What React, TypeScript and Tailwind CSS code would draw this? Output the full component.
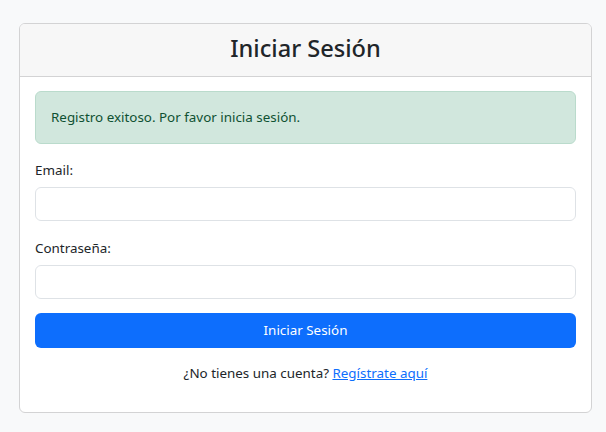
import React from 'react';

const font = { fontFamily: '"Segoe UI", "Noto Sans", "Liberation Sans", sans-serif' };

export default function App() {
  return (
    <div className="min-h-[432px] bg-[#f8f9fa] pt-[23px] px-[19px] text-[#212529]" style={font}>
      <div className="w-[573px] rounded-[6px] border border-[#d3d3d4] bg-white overflow-hidden">
        <div className="h-[53px] flex items-center justify-center bg-[#f7f7f7] border-b border-[#d3d3d4]">
          <h2 className="text-[23.6px] font-medium leading-none pb-[2px]">Iniciar Sesión</h2>
        </div>
        <div className="px-[15px] pt-[14px] pb-[28px]">
          <div className="h-[53px] flex items-center px-[15px] rounded-[6px] border border-[#badbcc] bg-[#d1e7dd] text-[#0f5132] text-[13.4px]">
            Registro exitoso. Por favor inicia sesión.
          </div>
          <form className="mt-[16px]" onSubmit={e => e.preventDefault()}>
            <label className="block text-[13.4px] leading-[21px] mb-[6px]">Email:</label>
            <input
              type="email"
              className="block w-full h-[34px] rounded-[6px] border border-[#dee2e6] bg-white px-3 text-[13.4px] outline-none"
            />
            <label className="block text-[13.4px] leading-[21px] mt-[17px] mb-[6px]">Contraseña:</label>
            <input
              type="password"
              className="block w-full h-[34px] rounded-[6px] border border-[#dee2e6] bg-white px-3 text-[13.4px] outline-none"
            />
            <button
              type="submit"
              className="mt-[14px] w-full h-[35px] rounded-[6px] bg-[#0d6efd] text-white text-[13.4px]"
            >
              Iniciar Sesión
            </button>
          </form>
          <p className="mt-[15px] text-center text-[13.4px] leading-[21px]">
            ¿No tienes una cuenta?{' '}
            <a href="#" className="text-[#0d6efd] underline">Regístrate aquí</a>
          </p>
        </div>
      </div>
    </div>
  );
}
